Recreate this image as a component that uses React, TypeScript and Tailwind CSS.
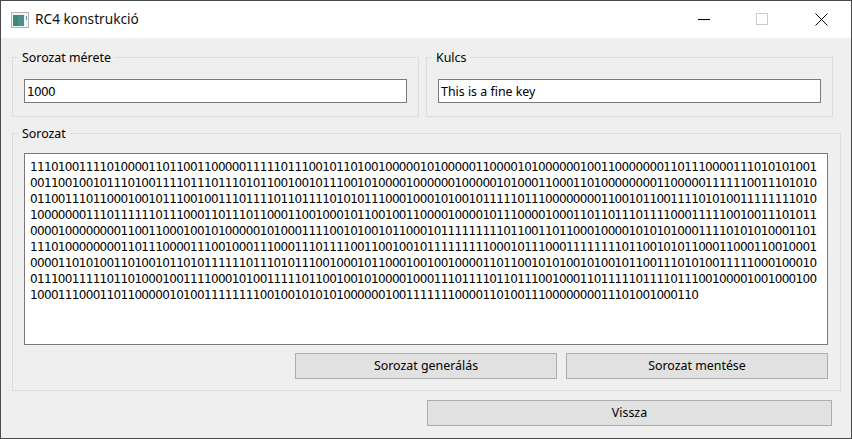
const lines = [
  "11101001111010000110110011000001111101110010110100100000101000001100001010000001001100000001101110000111010101001",
  "00110010010111010011110111011101011001001011100101000010000001000001010001100011010000000011000001111110011101010",
  "01100111011000100101110010011101111011011110101011100010001010010111110111000000001100101100111101010011111111010",
  "10000000111011111101110001101110110001100100010110010011000010000101110000100011011011101111000111110010011101011",
  "00001000000001100110001001010000010100011110010100101100010111111111011001101100010000101010100011110101010001101",
  "11101000000001101110000111001000111000111011110011001001011111111100010111000111111110110010101100011000110010001",
  "00001101010011010010110101111110111010111001000101100010010010000110110010101001010010110011101010011111000100010",
  "01110011111011010001001111000101001111101100100101000010001110111101101110010001101111101111011100100001001000100",
  "100011100011011000001010011111111001001010101000000100111111100001101001110000000011101001000110",
];

function GroupBox({ title, children, className }: { title: string; children: React.ReactNode; className: string }) {
  return (
    <fieldset className={`border border-[#dcdcdc] px-[11px] ${className}`}>
      <legend className="ml-[-6px] px-[4px] h-[16px] leading-[18px]">{title}</legend>
      {children}
    </fieldset>
  );
}

function LineInput({ value, digits }: { value: string; digits?: boolean }) {
  return (
    <div className={`w-[383px] h-[24px] mt-[14px] border border-[#7a7a7a] bg-white px-[2px] leading-[24px] ${digits ? "font-['DejaVu_Sans',sans-serif] text-[12px] tracking-[-0.675px]" : ""}`}>
      {value}
    </div>
  );
}

function PushButton({ label, className }: { label: string; className: string }) {
  return (
    <button className={`h-[26px] border border-[#adadad] bg-[#e1e1e1] pt-[1px] text-center ${className}`}>
      {label}
    </button>
  );
}

export default function App() {
  return (
    <div className="w-[852px] h-[439px] overflow-hidden bg-[#4a4a4a] p-[1px] text-[12.4px] text-black font-['Noto_Sans',sans-serif]">
      <div className="h-[437px] bg-[#efefef] flex flex-col">
        {/* Title bar */}
        <div className="h-[37px] bg-white flex items-center shrink-0">
          <svg width="18" height="16" viewBox="0 0 18 16" className="ml-[10px]">
            <rect x="0.5" y="0.5" width="17" height="15" fill="#f4f4f4" stroke="#b4b4b4" />
            <rect x="2" y="3" width="11" height="11" fill="#4c8f8c" />
            <rect x="2" y="3" width="5" height="11" fill="#3f8a6e" />
            <rect x="15" y="4" width="1" height="4" fill="#5aa0a0" />
          </svg>
          <span className="ml-[6px] text-[13.7px] text-[#111]">RC4 konstrukció</span>
          <div className="ml-auto flex items-start self-start pt-[12px]">
            <svg width="12" height="12" viewBox="0 0 12 12" className="mr-[46px]">
              <rect x="0" y="6" width="12" height="1" fill="#000" />
            </svg>
            <svg width="12" height="12" viewBox="0 0 12 12" className="mr-[47px]">
              <rect x="0.5" y="0.5" width="11" height="11" fill="none" stroke="#cccccc" />
            </svg>
            <svg width="13" height="13" viewBox="0 0 13 13" className="mr-[23px]">
              <path d="M0.5 0.5 L12.5 12.5 M12.5 0.5 L0.5 12.5" stroke="#000" strokeWidth="1" fill="none" />
            </svg>
          </div>
        </div>

        <div className="pl-[11px] pt-[11px]">
          <div className="flex gap-[7px]">
            <GroupBox title="Sorozat mérete" className="w-[407px] h-[68px]">
              <LineInput value="1000" digits />
            </GroupBox>
            <GroupBox title="Kulcs" className="w-[407px] h-[68px]">
              <LineInput value="This is a fine key" />
            </GroupBox>
          </div>

          <GroupBox title="Sorozat" className="w-[829px] h-[266px] mt-[8px]">
            <div className="w-[804px] h-[192px] mt-[12px] border border-[#7a7a7a] bg-white pl-[5px] pt-[5px] leading-[16px] whitespace-nowrap overflow-hidden font-['DejaVu_Sans',sans-serif] text-[12px] tracking-[-0.675px]">
              {lines.map((line, i) => (
                <div key={i}>{line}</div>
              ))}
            </div>
            <div className="w-[804px] flex justify-end gap-[9px] mt-[8px]">
              <PushButton label="Sorozat generálás" className="w-[262px]" />
              <PushButton label="Sorozat mentése" className="w-[262px]" />
            </div>
          </GroupBox>

          <div className="flex pl-[415px] mt-[9px]">
            <PushButton label="Vissza" className="w-[405px]" />
          </div>
        </div>
      </div>
    </div>
  );
}
